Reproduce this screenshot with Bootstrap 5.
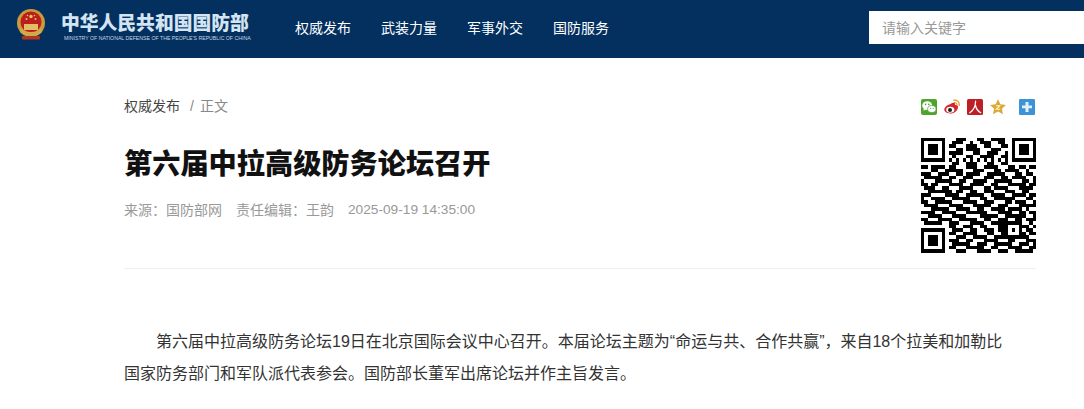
<!DOCTYPE html>
<html lang="zh-CN">
<head>
    <meta charset="UTF-8">
    <title>第六届中拉高级防务论坛召开</title>
    <meta name="viewport" content="width=device-width, initial-scale=1">

    <!-- Bootstrap CSS -->
    <link href="https://cdn.jsdelivr.net/npm/bootstrap@5.3.0/dist/css/bootstrap.min.css" rel="stylesheet">

    <style>
        body {
            font-family: "Liberation Sans", "Noto Sans CJK SC", sans-serif;
            background: #fff;
            overflow: hidden;
        }
        .top-bar {
            height: 58px;
            background: #03305f;
            padding: 0;
        }
        .brand-box {
            margin-left: 16px;
            margin-bottom: 4px;
            width: 279px;
        }
        .brand-emblem {
            margin-right: 15px;
            margin-top: -3px;
        }
        .brand-cn {
            font-size: 18.8px;
            line-height: 22px;
            font-weight: 900;
            color: #d3e4f3;
            white-space: nowrap;
        }
        .brand-en {
            font-size: 5.2px;
            line-height: 7px;
            color: #c5d6e6;
            white-space: nowrap;
            margin-left: 3px;
        }
        .top-links {
            gap: 30px;
            margin-bottom: 2px;
        }
        .top-links a {
            color: #fff;
            font-size: 14px;
            padding: 0;
            text-decoration: none;
        }
        .search-input {
            width: 215px;
            height: 33px;
            border: 0;
            border-radius: 0;
            padding: 0 13px;
            font-size: 14px;
            margin-bottom: 3px;
        }
        .search-input::placeholder {
            color: #999;
        }
        .page-wrap {
            padding: 38px 48px 0 124px;
        }
        .head-block {
            border-bottom: 1px solid #eee;
            padding-bottom: 14px;
            height: 173px;
        }
        .crumbs {
            font-size: 14px;
            line-height: 20px;
            margin: 0 0 28px;
            --bs-breadcrumb-divider-color: #888;
            --bs-breadcrumb-item-padding-x: 10px;
        }
        .crumbs .breadcrumb-item + .breadcrumb-item::before {
            padding-right: 6px;
        }
        .crumbs a {
            color: #444;
            text-decoration: none;
        }
        .crumbs .active {
            color: #888;
        }
        .art-title {
            font-size: 28.2px;
            line-height: 40px;
            font-weight: 900;
            color: #111;
            margin: 0 0 16px;
        }
        .art-meta {
            font-size: 14px;
            line-height: 20px;
            color: #999;
            gap: 14px;
        }
        .art-date {
            font-size: 13.7px;
        }
        .share-col {
            width: 115px;
        }
        .share-icons {
            height: 16px;
            margin-top: 3px;
            margin-bottom: 22px;
            padding-right: 1px;
        }
        .share-icons svg {
            display: block;
            width: 16px;
            height: 16px;
        }
        .share-gap {
            gap: 7px;
        }
        .qr-code {
            display: block;
            width: 115px;
            height: 116px;
        }
        .art-body {
            width: 880px;
            margin-top: 57px;
            font-size: 16px;
            line-height: 32px;
            color: #333;
            text-indent: 32px;
        }
    </style>
</head>
<body>

    <nav class="navbar top-bar align-items-center flex-nowrap">
        <div class="brand-box d-flex align-items-center flex-shrink-0">
            <svg width="30" height="34" viewBox="0 0 30 34" class="flex-shrink-0 brand-emblem">
                <circle cx="15" cy="14" r="14" fill="#c79a3c"/>
                <circle cx="15" cy="13" r="10.5" fill="#bb1e1c"/>
                <path d="M5 19c3 3 6 4 10 4s7-1 10-4l1 4c-3 3-7 4-11 4s-8-1-11-4z" fill="#d2a94a"/>
                <rect x="8" y="15" width="14" height="6" fill="#e2bd63"/>
                <rect x="6" y="27" width="18" height="3.5" rx="1" fill="#b3341f"/>
                <circle cx="15" cy="7.5" r="1.7" fill="#e9c75f"/>
                <circle cx="10.5" cy="10" r="1" fill="#e9c75f"/>
                <circle cx="19.5" cy="10" r="1" fill="#e9c75f"/>
                <circle cx="11.5" cy="6.5" r=".8" fill="#e9c75f"/>
                <circle cx="18.5" cy="6.5" r=".8" fill="#e9c75f"/>
            </svg>
            <div>
                <div class="brand-cn">中华人民共和国国防部</div>
                <div class="brand-en">MINISTRY OF NATIONAL DEFENSE OF THE PEOPLE'S REPUBLIC OF CHINA</div>
            </div>
        </div>
        <div class="navbar-nav flex-row top-links">
            <a class="nav-link" href="#">权威发布</a>
            <a class="nav-link" href="#">武装力量</a>
            <a class="nav-link" href="#">军事外交</a>
            <a class="nav-link" href="#">国防服务</a>
        </div>
        <input class="form-control search-input ms-auto" type="text" placeholder="请输入关键字">
    </nav>

    <div class="page-wrap">
        <div class="head-block d-flex justify-content-between">
            <div>
                <ol class="breadcrumb crumbs">
                    <li class="breadcrumb-item"><a href="#">权威发布</a></li>
                    <li class="breadcrumb-item active">正文</li>
                </ol>
                <h1 class="art-title">第六届中拉高级防务论坛召开</h1>
                <div class="art-meta d-flex">
                    <span>来源&#xFF1A;国防部网</span>
                    <span>责任编辑&#xFF1A;王韵</span>
                    <span class="art-date">2025-09-19 14:35:00</span>
                </div>
            </div>
            <div class="share-col flex-shrink-0">
                <div class="share-icons d-flex justify-content-between">
                    <div class="d-flex share-gap">
                        <!-- wechat -->
                        <svg viewBox="0 0 16 16">
                            <rect width="16" height="16" rx="2" fill="#4ea42d"/>
                            <ellipse cx="6.2" cy="6.6" rx="5" ry="4.3" fill="#fff"/>
                            <path d="M3 9.500l-.6 2.300 2.600-1.400z" fill="#fff"/>
                            <ellipse cx="10.800" cy="10" rx="4.200" ry="3.500" fill="#fff" stroke="#4ea42d" stroke-width=".7"/>
                            <circle cx="4.600" cy="5.400" r=".8" fill="#4ea42d"/>
                            <circle cx="7.800" cy="5.400" r=".8" fill="#4ea42d"/>
                            <circle cx="9.400" cy="9.300" r=".6" fill="#4ea42d"/>
                            <circle cx="12.200" cy="9.300" r=".6" fill="#4ea42d"/>
                        </svg>
                        <!-- weibo -->
                        <svg viewBox="0 0 16 16">
                            <path d="M6.500 5c2.700-1.900 5-1.400 4.600 1.100 2.200-.2 3.400.9 2.800 2.800-.8 3.100-4.200 5.600-7.800 5.600C2.800 14.500.3 12.900.3 10.600.3 8.500 3.100 5.900 6.500 5z" fill="#d6252b"/>
                            <ellipse cx="6.300" cy="10.800" rx="4.100" ry="3" fill="#fff"/>
                            <circle cx="6" cy="10.900" r="2" fill="#222"/>
                            <path d="M9.800 1.200c3.400-.6 5.900 1.900 5.400 5.300M10.200 3.500c1.700-.2 3 1 2.800 2.700" fill="none" stroke="#e8912d" stroke-width="1.200" stroke-linecap="round"/>
                        </svg>
                        <!-- people -->
                        <svg viewBox="0 0 16 16">
                            <rect width="16" height="16" rx="1.500" fill="#bd1f25"/>
                            <path d="M8.600 2.200C8.500 7 6.500 11.300 2.800 13.800M8.500 6.500c.6 3 2.500 5.800 5.200 7.300" fill="none" stroke="#fff" stroke-width="1.300" stroke-linecap="round"/>
                        </svg>
                        <!-- qzone star -->
                        <svg viewBox="0 0 16 16">
                            <path d="M8 .3l2.400 5 5.500.7-4 3.700 1.100 5.600L8 12.500l-5 2.800 1.100-5.600L.1 6l5.500-.7z" fill="#d9a93a"/>
                            <path d="M6 6.700h3.800L6.300 10.300h3.900" fill="none" stroke="#fff3c9" stroke-width="1.100"/>
                        </svg>
                    </div>
                    <!-- more -->
                    <svg viewBox="0 0 16 16">
                        <rect width="16" height="16" rx="1" fill="#3d93d8"/>
                        <path d="M6.500 3h3v3.500H13v2.800H9.500V13h-3V9.300H3V6.500h3.500z" fill="#e3f0fa"/>
                    </svg>
                </div>
                <svg id="qrCode" class="qr-code" viewBox="0 0 33 33" shape-rendering="crispEdges"></svg>
            </div>
        </div>

        <p class="art-body">第六届中拉高级防务论坛19日在北京国际会议中心召开。本届论坛主题为“命运与共、合作共赢”&#xFF0C;来自18个拉美和加勒比国家防务部门和军队派代表参会。国防部长董军出席论坛并作主旨发言。</p>
    </div>

    <script>
        // rows of the qr picture, 1 = dark module
        const qrRows = [
            '1111111' + '0' + '00111000110011110' + '0' + '1111111',
            '1000001' + '0' + '01110010011100110' + '0' + '1000001',
            '1011101' + '0' + '11000111001100011' + '0' + '1011101',
            '1011101' + '0' + '00110111100011100' + '0' + '1011101',
            '1011101' + '0' + '11110001100111001' + '0' + '1011101',
            '1000001' + '0' + '01000110011110011' + '0' + '1000001',
            '1111111' + '0' + '10101010101010101' + '0' + '1111111',
            '00000000' + '01100111000110011' + '00000000',
            '110111101100011100111100011011011',
            '000110011111000111000110111100100',
            '111001110011011110011111000110110',
            '011111001100111000111001101111001',
            '100011111001100111100111110001101',
            '110110001111001111001100011111011',
            '011100110001111000110111100011110',
            '001111111011001100111000111001100',
            '111000011110011111001111001111011',
            '100111100111110001100111111000110',
            '110011111000111100111000110111001',
            '011110001111000111110011100011111',
            '000111110011110011001111011110100',
            '111100111100011111100011110011011',
            '001111000111100001111100111111001',
            '110001111001111100110011100110111',
            '011111001110001111001111' + '11111' + '0010',
            '00000000' + '1100111001100011' + '10001' + '1101',
            '1111111' + '0' + '0111001100111011' + '10101' + '0110',
            '1000001' + '0' + '1100111100011001' + '10001' + '1011',
            '1011101' + '0' + '0011100111100111' + '11111' + '1100',
            '1011101' + '0' + '1110011000111100' + '01100' + '0111',
            '1011101' + '0' + '0111110011100111' + '11001' + '1101',
            '1000001' + '0' + '1100011111001100' + '01111' + '0011',
            '1111111' + '0' + '0011100011110011' + '10011' + '1110'
        ];
        let qrPath = '';
        qrRows.forEach((row, y) => {
            [...row].forEach((cell, x) => {
                if (cell === '1') qrPath += 'M' + x + ' ' + y + 'h1v1h-1z';
            });
        });
        document.getElementById('qrCode').innerHTML = '<path fill="#000" d="' + qrPath + '"/>';
    </script>
    <!-- Bootstrap JS -->
    <script src="https://cdn.jsdelivr.net/npm/bootstrap@5.3.0/dist/js/bootstrap.bundle.min.js"></script>
</body>
</html>
